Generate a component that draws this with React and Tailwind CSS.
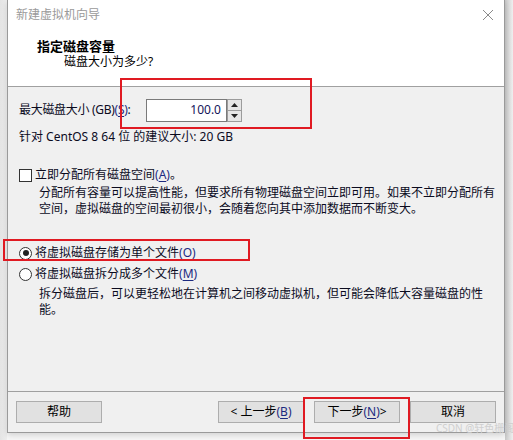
import React from "react";

const F = { fontFamily: '"Noto Sans", "Noto Sans CJK SC", sans-serif' };

function U({ c }) {
  return (
    <span className="text-[#1c2a80]">
      (<span className="underline underline-offset-2">{c}</span>)
    </span>
  );
}

function Btn({ children }) {
  return (
    <div className="w-[86px] h-[22px] border border-[#adadad] bg-[#e1e1e1] flex items-center justify-center text-[12px] text-black leading-none whitespace-nowrap">
      {children}
    </div>
  );
}

export default function App() {
  return (
    <div
      className="relative w-[513px] h-[440px] overflow-hidden bg-[#f6f6f6] text-[#0b0b1e]"
      style={F}
    >
      {/* left / right shadows */}
      <div className="absolute left-0 top-0 w-[7px] h-[440px] bg-gradient-to-r from-[#e4e4e4] to-[#eeeeee]" />
      <div className="absolute left-[505px] top-0 w-[8px] h-[440px] bg-gradient-to-r from-[#c8c8c8] to-[#efefef]" />

      <div className="absolute left-[7px] top-0 w-[498px] h-[433px] border-l border-r border-b border-[#9a9a9a] bg-[#f0f0f0] flex flex-col shadow-[0_2px_6px_rgba(0,0,0,0.15)]">
        {/* white header */}
        <div className="h-[87px] bg-white border-b border-[#a0a0a0] flex flex-col">
          <div className="h-[30px] flex items-center justify-between pl-[8px] pr-[9px]">
            <span className="text-[12px] text-[#9a9a9a]">新建虚拟机向导</span>
            <svg width="12" height="12" viewBox="0 0 12 12" className="mr-[1px]">
              <path d="M1 1 L11 11 M11 1 L1 11" stroke="#8a8a8a" strokeWidth="1" />
            </svg>
          </div>
          <div className="pl-[29px] pt-[8px] text-[13px] font-bold text-black leading-[16px]">
            指定磁盘容量
          </div>
          <div className="pl-[56px] text-[12px] text-black leading-[16px]">
            磁盘大小为多少?
          </div>
        </div>

        {/* body */}
        <div className="h-[304px] pl-[11px] pr-[4px] flex flex-col text-[12px] whitespace-nowrap">
          <div className="mt-[12px] h-[22px] flex items-center">
            <div className="w-[127px] leading-none tracking-[-0.3px]">
              最大磁盘大小 (GB)<U c="S" />:
            </div>
            <div className="w-[81px] h-[23px] border border-[#7a7a7a] bg-white flex items-center justify-end pr-[5px] text-[#14145a] leading-none">
              100.0
            </div>
            <div className="w-[15px] h-[23px] flex flex-col border border-[#9c9c9c] bg-[#e6e6e6]">
              <div className="flex-1 flex items-center justify-center border-b border-[#9c9c9c]">
                <svg width="7" height="4" viewBox="0 0 7 4"><path d="M3.5 0 L7 4 L0 4 Z" fill="#222" /></svg>
              </div>
              <div className="flex-1 flex items-center justify-center">
                <svg width="7" height="4" viewBox="0 0 7 4"><path d="M0 0 L7 0 L3.5 4 Z" fill="#222" /></svg>
              </div>
            </div>
          </div>

          <div className="mt-[8px] leading-[16px]">针对 CentOS 8 64 位 的建议大小: 20 GB</div>

          <div className="mt-[22px] h-[16px] flex items-center">
            <div className="w-[13px] h-[13px] border border-[#333] bg-white" />
            <span className="ml-[3px] leading-none">
              立即分配所有磁盘空间<U c="A" />。
            </span>
          </div>
          <div className="mt-[2px] pl-[20px] leading-[16px]">
            <div>分配所有容量可以提高性能，但要求所有物理磁盘空间立即可用。如果不立即分配所有</div>
            <div>空间，虚拟磁盘的空间最初很小，会随着您向其中添加数据而不断变大。</div>
          </div>

          <div className="mt-[28px] h-[16px] flex items-center">
            <div className="w-[13px] h-[13px] rounded-full border border-[#333] bg-white flex items-center justify-center">
              <div className="w-[6px] h-[6px] rounded-full bg-[#222]" />
            </div>
            <span className="ml-[3px] leading-none">
              将虚拟磁盘存储为单个文件<U c="O" />
            </span>
          </div>
          <div className="mt-[5px] h-[16px] flex items-center">
            <div className="w-[13px] h-[13px] rounded-full border border-[#333] bg-white" />
            <span className="ml-[3px] leading-none">
              将虚拟磁盘拆分成多个文件<U c="M" />
            </span>
          </div>
          <div className="mt-[4px] pl-[20px] leading-[16px]">
            <div>拆分磁盘后，可以更轻松地在计算机之间移动虚拟机，但可能会降低大容量磁盘的性</div>
            <div>能。</div>
          </div>
        </div>

        {/* footer */}
        <div className="flex-1 border-t border-[#a0a0a0] px-[8px] pt-[9px] flex items-start">
          <Btn>帮助</Btn>
          <div className="flex-1" />
          <Btn>
            &lt; 上一步<U c="B" />
          </Btn>
          <div className="ml-[10px]">
            <Btn>
              下一步<U c="N" /> &gt;
            </Btn>
          </div>
          <div className="ml-[10px]">
            <Btn>取消</Btn>
          </div>
        </div>
      </div>

      {/* red annotation boxes */}
      <div className="absolute left-[120px] top-[78px] w-[192px] h-[51px] border-2 border-[#e01a22]" />
      <div className="absolute left-[3px] top-[239px] w-[247px] h-[22px] border-2 border-[#e01a22]" />
      <div className="absolute left-[303px] top-[397px] w-[107px] h-[42px] border-2 border-[#e01a22]" />

      {/* watermark */}
      <div className="absolute left-[436px] top-[423px] text-[10px] text-[#cfcfcf] leading-none whitespace-nowrap">
        CSDN @轩色栅阁
      </div>
    </div>
  );
}
